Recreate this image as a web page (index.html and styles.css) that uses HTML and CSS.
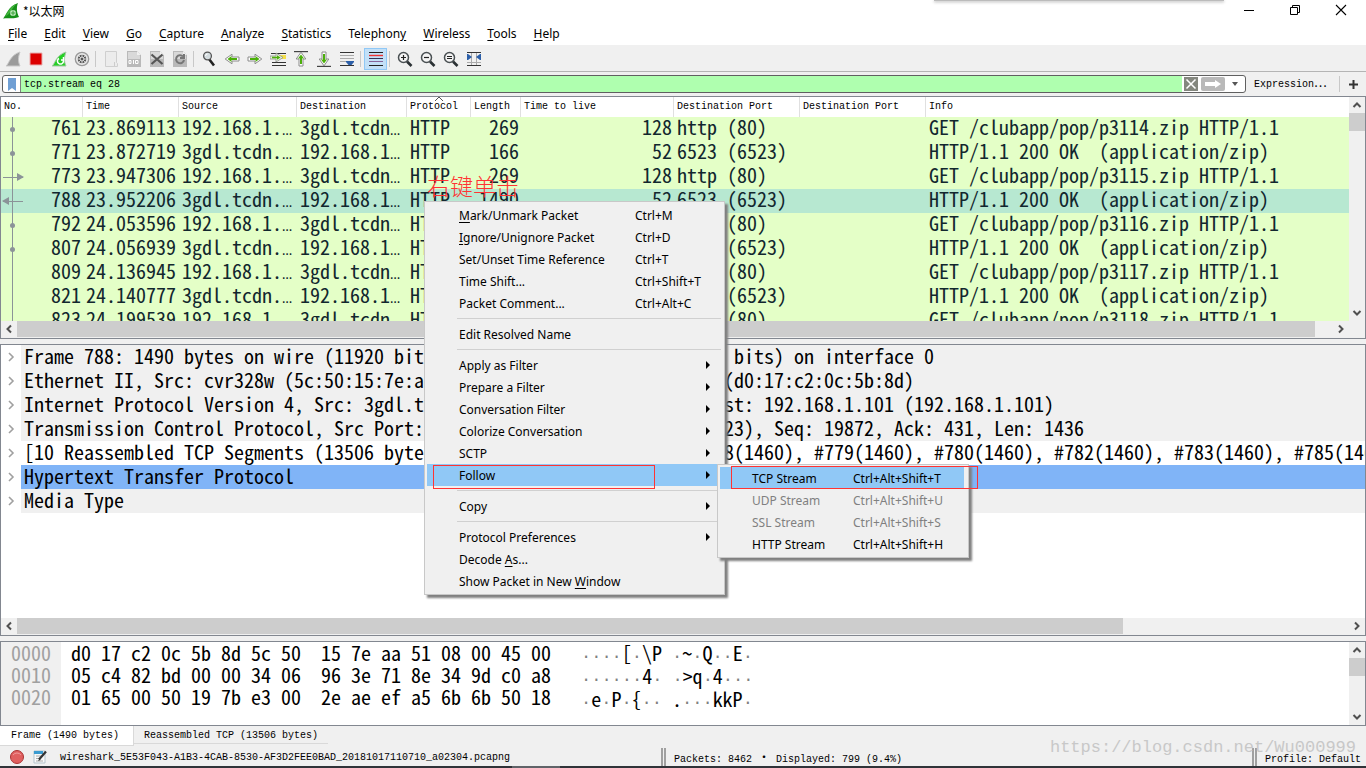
FILE: index.html
```html
<!DOCTYPE html>
<html lang="en">
<head>
<meta charset="utf-8">
<title>*以太网</title>
<link rel="stylesheet" href="styles.css">
</head>
<body>
<svg width="0" height="0" class="defs" aria-hidden="true">
  <symbol id="up" viewBox="0 0 16 16"><path d="M4.500 10 8 6.500 11.500 10" fill="none" stroke="#505050" stroke-width="2"/></symbol>
  <symbol id="down" viewBox="0 0 16 16"><path d="M4.500 6 8 9.500 11.500 6" fill="none" stroke="#505050" stroke-width="2"/></symbol>
  <symbol id="left" viewBox="0 0 16 16"><path d="M10 4.500 6.500 8 10 11.500" fill="none" stroke="#505050" stroke-width="2"/></symbol>
  <symbol id="right" viewBox="0 0 16 16"><path d="M6 4.500 9.500 8 6 11.500" fill="none" stroke="#505050" stroke-width="2"/></symbol>
  <symbol id="expand" viewBox="0 0 8 12"><path d="M2 2 6 6 2 10" fill="none" stroke="#a0a0a0" stroke-width="1.600"/></symbol>
  <symbol id="sub" viewBox="0 0 4 8"><path d="M0 0 4 4 0 8z" fill="#000"/></symbol>
  <symbol id="lens" viewBox="0 0 16 16"><path d="M10 10.500 14.500 15" stroke="#2b3134" stroke-width="2.600"/><circle cx="6.500" cy="6.500" r="5" fill="#f4f4f4" stroke="#4a5053" stroke-width="1.500"/></symbol>
  <symbol id="arrow" viewBox="0 0 16 16"><path d="M1 6h7V3.200L14.800 8 8 12.800V10H1z" fill="#fff" stroke="#8c8c8c"/><path d="M3 8h6" stroke="#4caf0a" stroke-width="2"/><path d="M8.500 5 12.500 8l-4 3z" fill="#4caf0a"/></symbol>
  <symbol id="doc" viewBox="0 0 16 16"><path d="M1 0h10l4 4v12H1z" fill="#b9b9b9"/><path d="M2 1h8.500L14 4.500V8H2z" fill="#d9d9d9"/><path d="M11 0v4h4z" fill="#f0f0f0"/></symbol>
</svg>

<header class="titlebar">
  <svg class="app" width="16" height="16" viewBox="0 0 16 16"><path d="M0 15.500C3 13 5 3 15 0c-2 5-1 10 1 14-5 2-11 1-16 1.500z" fill="#169018"/><path d="M1 14C5 11 6 4 13 1 7 8 8 11 1 14z" fill="#43b53d"/><circle cx="10" cy="10" r="3" fill="#bfe9bd"/><path d="M10 7.500v5M7.500 10h5" stroke="#3ba23a"/></svg>
  <h1 class="title">*以太网</h1>
  <div class="window-buttons">
    <button aria-label="Minimize"><svg width="12" height="12"><path d="M1 6.500h10" stroke="#000"/></svg></button>
    <button aria-label="Restore"><svg width="12" height="12" fill="none" stroke="#000"><path d="M1.500 3.500h7v7h-7zM3.500 3V1.500h7v7H9"/></svg></button>
    <button aria-label="Close"><svg width="12" height="12"><path d="M1 1 11 11M11 1 1 11" stroke="#000" stroke-width="1.100"/></svg></button>
  </div>
  <div class="window-behind"></div>
</header>

<nav class="menubar">
  <button><u>F</u>ile</button><button><u>E</u>dit</button><button><u>V</u>iew</button><button><u>G</u>o</button><button><u>C</u>apture</button><button><u>A</u>nalyze</button><button><u>S</u>tatistics</button><button>Telephon<u>y</u></button><button><u>W</u>ireless</button><button><u>T</u>ools</button><button><u>H</u>elp</button>
</nav>

<div class="toolbar" role="toolbar">
  <button aria-label="Start capture"><svg viewBox="0 0 16 16"><path d="M1 15C4 13 5 4 15 1c-2 5-2 10 0 14z" fill="#9b9b9b" stroke="#c9c9c9"/></svg></button>
  <button aria-label="Stop capture"><svg viewBox="0 0 16 16"><path d="M2 2h12v12H2z" fill="#dc0000" stroke="#e8b0b0" /></svg></button>
  <button aria-label="Restart capture"><svg viewBox="0 0 16 16"><path d="M1 15C4 13 5 4 15 1c-2 5-2 10 0 14z" fill="#25cf25" stroke="#a4c9a4"/><path d="M8 7.500a3 3 0 1 0 4 1M12.500 6v3H10" fill="none" stroke="#fff" stroke-width="1.500"/></svg></button>
  <button aria-label="Capture options"><svg viewBox="0 0 16 16"><circle cx="8" cy="8" r="6.700" fill="#e6e6e6" stroke="#999" stroke-width="1.300"/><circle cx="8" cy="8" r="4.300" fill="#555"/><path d="M8 3v10M3 8h10M4.500 4.500l7 7M11.500 4.500l-7 7" stroke="#e6e6e6" stroke-width=".8"/><circle cx="8" cy="8" r="2" fill="#555" stroke="#e6e6e6"/></svg></button>
  <i class="sep"></i>
  <button aria-label="Open"><svg viewBox="0 0 16 16"><path d="M2.500.500h11v11l1 1v3h-12z" fill="#ececec" stroke="#cfcfcf"/><path d="M11.500 11v4" stroke="#ccc"/></svg></button>
  <button aria-label="Save"><svg viewBox="0 0 16 16"><use href="#doc"/><path d="M3 9.500h2v3H3zM9.500 9.500h2.500v3H9.500z" fill="none" stroke="#fff"/><path d="M7.500 9v4" stroke="#fff"/></svg></button>
  <button aria-label="Close file"><svg viewBox="0 0 16 16"><use href="#doc"/><path d="M2.500 3.500l11 9.500M13.500 3.500l-11 9.500" stroke="#555" stroke-width="2.200"/></svg></button>
  <button aria-label="Reload"><svg viewBox="0 0 16 16"><use href="#doc"/><path d="M11 5.500A4 4 0 1 0 12 9M12 3v4H8" fill="none" stroke="#777" stroke-width="2"/></svg></button>
  <i class="sep"></i>
  <button aria-label="Find packet"><svg viewBox="0 0 16 16"><path d="M8 8l5 6.500" stroke="#222" stroke-width="2.600"/><circle cx="6.500" cy="5" r="3.900" fill="#d5dde0" stroke="#555" stroke-width="1.300"/><path d="M4.500 5a2 2 0 0 1 2-2" fill="none" stroke="#fff"/></svg></button>
  <button aria-label="Previous packet"><svg viewBox="0 0 16 16"><use href="#arrow" transform="rotate(180 8 8)"/></svg></button>
  <button aria-label="Next packet"><svg viewBox="0 0 16 16"><use href="#arrow"/></svg></button>
  <button aria-label="Go to packet"><svg viewBox="0 0 16 16"><path d="M1 2.500h15M2 11.500h14M2 14.500h14" stroke="#333" stroke-width="1.200"/><path d="M9 6h7" stroke="#f4e04a" stroke-width="4"/><path d="M0 5h6V2l7 4.500L6 11V8H0z" fill="#e8f5dc" stroke="#8c8c8c" stroke-width=".8"/><path d="M2 6.500h6" stroke="#4caf0a" stroke-width="1.600"/><path d="M7 4.200 10.500 6.500 7 8.800z" fill="#4caf0a"/></svg></button>
  <button aria-label="First packet"><svg viewBox="0 0 16 16"><path d="M1 .6h14" stroke="#444" stroke-width="1.200"/><use href="#arrow" transform="rotate(-90 8 8)"/></svg></button>
  <button aria-label="Last packet"><svg viewBox="0 0 16 16"><use href="#arrow" transform="rotate(90 8 8)"/><path d="M1 15.400h14" stroke="#444" stroke-width="1.200"/></svg></button>
  <button aria-label="Auto scroll"><svg viewBox="0 0 16 16"><path d="M1 1.500h14" stroke="#333"/><path d="M1 4.500h14M1 7.500h14M1 10.500h8" stroke="#aaa"/><path d="M1 14.500h14" stroke="#333"/><path d="M7 10h8v1l-2.500 3h-3L7 11z" fill="#2c5fa8"/></svg></button>
  <i class="sep"></i>
  <button class="on" aria-label="Colorize packets" aria-pressed="true"><svg viewBox="0 0 16 16"><path d="M1 1.500h14" stroke="#222"/><path d="M1 4.500h14" stroke="#e33" stroke-width="1.400"/><path d="M1 7.500h14" stroke="#335"/><path d="M1 10.500h14" stroke="#86659a"/><path d="M1 14.500h14" stroke="#222"/></svg></button>
  <i class="sep"></i>
  <button aria-label="Zoom in"><svg viewBox="0 0 16 16"><use href="#lens"/><path d="M4 6.500h5M6.500 4v5" stroke="#222" stroke-width="1.200"/></svg></button>
  <button aria-label="Zoom out"><svg viewBox="0 0 16 16"><use href="#lens"/><path d="M4 6.500h5" stroke="#222" stroke-width="1.200"/></svg></button>
  <button aria-label="Normal size"><svg viewBox="0 0 16 16"><use href="#lens"/><path d="M4 5.500h5M4 7.500h5" stroke="#222"/></svg></button>
  <button aria-label="Resize columns"><svg viewBox="0 0 16 16"><path d="M1 1.500h14M1 14.500h14" stroke="#333" stroke-width="1.200"/><path d="M1 11.500h14M5.500 2v12M10.500 2v12" stroke="#aaa"/><path d="M1 3h1l4 3-4 3H1zM15 3h-1l-4 3 4 3h1z" fill="#2c5fa8"/></svg></button>
</div>

<form class="filterbar">
  <div class="filter">
    <button type="button" class="bookmark" aria-label="Bookmark"><svg width="8" height="13"><path d="M0 0h8v13L4 10 0 13z" fill="#6f9fd4"/></svg></button>
    <input class="expr" type="text" value="tcp.stream eq 28" aria-label="Display filter">
    <button type="button" class="clear" aria-label="Clear"><svg width="14" height="14"><path d="M0 0h14v14H0z" fill="#84877f"/><path d="M2.500 2.500l9 9M11.500 2.500l-9 9" stroke="#fff" stroke-width="1.500"/></svg></button>
    <button type="button" class="apply" aria-label="Apply"><svg width="24" height="14"><rect width="24" height="14" rx="2" fill="#b9b9b9"/><path d="M4 5h10V3l6 4-6 4V9H4z" fill="#fff"/></svg></button>
    <button type="button" class="drop" aria-label="Recent filters"><svg width="6" height="4"><path d="M0 0h6L3 4z" fill="#555"/></svg></button>
  </div>
  <button type="button" class="expression">Expression<span class="wide-sign">…</span></button>
  <i class="sep"></i>
  <button type="button" class="add" aria-label="Add filter button"><svg width="9" height="9"><path d="M4.500 0v9M0 4.500h9" stroke="#333" stroke-width="2"/></svg></button>
</form>

<main class="panes">
  <section class="pane packets">
    <div class="view">
      <table class="list">
        <colgroup><col class="c-no"><col class="c-time"><col class="c-src"><col class="c-dst"><col class="c-proto"><col class="c-len"><col class="c-ttl"><col class="c-port"><col class="c-port"><col></colgroup>
        <thead><tr><th>No.</th><th>Time</th><th>Source</th><th>Destination</th><th class="sorted">Protocol<svg class="sort" width="8" height="4"><path d="M0 4 4 0 8 4" fill="none" stroke="#555"/></svg></th><th>Length</th><th>Time to live</th><th>Destination Port</th><th>Destination Port</th><th>Info</th></tr></thead>
        <tbody>
          <tr><td class="num dot">761</td><td>23.869113</td><td>192.168.1.<b>…</b></td><td>3gdl.tcdn<b>…</b></td><td>HTTP</td><td class="num">269</td><td class="num">128</td><td>http (80)</td><td></td><td>GET /clubapp/pop/p3114.zip HTTP/1.1</td></tr>
          <tr><td class="num dot">771</td><td>23.872719</td><td>3gdl.tcdn.<b>…</b></td><td>192.168.1<b>…</b></td><td>HTTP</td><td class="num">166</td><td class="num">52</td><td>6523 (6523)</td><td></td><td>HTTP/1.1 200 OK&nbsp; (application/zip)</td></tr>
          <tr><td class="num request">773</td><td>23.947306</td><td>192.168.1.<b>…</b></td><td>3gdl.tcdn<b>…</b></td><td>HTTP</td><td class="num">269</td><td class="num">128</td><td>http (80)</td><td></td><td>GET /clubapp/pop/p3115.zip HTTP/1.1</td></tr>
          <tr class="current"><td class="num response">788</td><td>23.952206</td><td>3gdl.tcdn.<b>…</b></td><td>192.168.1<b>…</b></td><td>HTTP</td><td class="num">1490</td><td class="num">52</td><td>6523 (6523)</td><td></td><td>HTTP/1.1 200 OK&nbsp; (application/zip)</td></tr>
          <tr><td class="num dot">792</td><td>24.053596</td><td>192.168.1.<b>…</b></td><td>3gdl.tcdn<b>…</b></td><td>HTTP</td><td class="num">269</td><td class="num">128</td><td>http (80)</td><td></td><td>GET /clubapp/pop/p3116.zip HTTP/1.1</td></tr>
          <tr><td class="num dot">807</td><td>24.056939</td><td>3gdl.tcdn.<b>…</b></td><td>192.168.1<b>…</b></td><td>HTTP</td><td class="num">1490</td><td class="num">52</td><td>6523 (6523)</td><td></td><td>HTTP/1.1 200 OK&nbsp; (application/zip)</td></tr>
          <tr><td class="num">809</td><td>24.136945</td><td>192.168.1.<b>…</b></td><td>3gdl.tcdn<b>…</b></td><td>HTTP</td><td class="num">269</td><td class="num">128</td><td>http (80)</td><td></td><td>GET /clubapp/pop/p3117.zip HTTP/1.1</td></tr>
          <tr><td class="num">821</td><td>24.140777</td><td>3gdl.tcdn.<b>…</b></td><td>192.168.1<b>…</b></td><td>HTTP</td><td class="num">1490</td><td class="num">52</td><td>6523 (6523)</td><td></td><td>HTTP/1.1 200 OK&nbsp; (application/zip)</td></tr>
          <tr><td class="num">823</td><td>24.199539</td><td>192.168.1.<b>…</b></td><td>3gdl.tcdn<b>…</b></td><td>HTTP</td><td class="num">269</td><td class="num">128</td><td>http (80)</td><td></td><td>GET /clubapp/pop/p3118.zip HTTP/1.1</td></tr>
        </tbody>
      </table>
    </div>
    <div class="vbar"><svg><use href="#up"/></svg><div class="track"><i class="thumb short"></i></div><svg><use href="#down"/></svg></div>
    <div class="hbar"><svg><use href="#left"/></svg><div class="track"><i class="thumb wide"></i></div><svg><use href="#right"/></svg></div>
    <div class="corner"></div>
  </section>

  <section class="pane details">
    <ul class="tree view">
      <li><svg><use href="#expand"/></svg><span>Frame 788: 1490 bytes on wire (11920 bits), 1490 bytes captured (11920 bits) on interface 0</span></li>
      <li><svg><use href="#expand"/></svg><span>Ethernet II, Src: cvr328w (5c:50:15:7e:aa:51), Dst: AsustekC_0c:5b:8d (d0:17:c2:0c:5b:8d)</span></li>
      <li><svg><use href="#expand"/></svg><span>Internet Protocol Version 4, Src: 3gdl.tcdn.qq.com (113.142.52.157), Dst: 192.168.1.101 (192.168.1.101)</span></li>
      <li><svg><use href="#expand"/></svg><span>Transmission Control Protocol, Src Port: http (80), Dst Port: 6523 (6523), Seq: 19872, Ack: 431, Len: 1436</span></li>
      <li class="plain"><svg><use href="#expand"/></svg><span>[10 Reassembled TCP Segments (13506 bytes): #776(366), #777(1460), #778(1460), #779(1460), #780(1460), #782(1460), #783(1460), #785(1460)</span></li>
      <li class="chosen"><svg><use href="#expand"/></svg><span>Hypertext Transfer Protocol</span></li>
      <li><svg><use href="#expand"/></svg><span>Media Type</span></li>
    </ul>
    <div class="hbar"><svg><use href="#left"/></svg><div class="track"><i class="thumb most"></i></div><svg><use href="#right"/></svg></div>
  </section>

  <section class="pane bytes">
    <div class="view dump">
      <pre class="offsets">0000
0010
0020</pre>
      <pre class="hex">d0 17 c2 0c 5b 8d 5c 50  15 7e aa 51 08 00 45 00
05 c4 82 bd 00 00 34 06  96 3e 71 8e 34 9d c0 a8
01 65 00 50 19 7b e3 00  2e ae ef a5 6b 6b 50 18</pre>
      <pre class="ascii"><s>····</s>[<s>·</s>\P <s>·</s>~<s>·</s>Q<s>··</s>E<s>·</s>
<s>······</s>4<s>·</s> <s>·</s>&gt;q<s>·</s>4<s>···</s>
<s>·</s>e<s>·</s>P<s>·</s>{<s>··</s> .<s>···</s>kkP<s>·</s></pre>
    </div>
    <div class="vbar"><svg><use href="#up"/></svg><div class="track"><i class="thumb short"></i></div><svg><use href="#down"/></svg></div>
  </section>
</main>

<div class="tabs" role="tablist">
  <button role="tab" aria-selected="true" class="tab active">Frame (1490 bytes)</button>
  <button role="tab" aria-selected="false" class="tab">Reassembled TCP (13506 bytes)</button>
</div>

<footer class="status">
  <div class="file">
    <svg width="14" height="14"><circle cx="7" cy="7" r="6.500" fill="#e06060" stroke="#a33"/><path d="M3 5a5 5 0 0 1 8 0" fill="none" stroke="#f09a9a"/></svg>
    <svg width="14" height="14"><path d="M1 1h11v12H1z" fill="#f8f8f8" stroke="#b5c4cc"/><path d="M1 1h9v3H1z" fill="#3b9bd0"/><path d="M3 6h5M3 8.500h3M3 11h7" stroke="#aaa"/><path d="M13 1.500 6 9.500" stroke="#333" stroke-width="2.200"/><path d="M6.500 8.500 5 11l2.500-1" fill="#333"/></svg>
    <span>wireshark_5E53F043-A1B3-4CAB-8530-AF3D2FEE0BAD_20181017110710_a02304.pcapng</span>
  </div>
  <div class="count">Packets: 8462 <span class="wide-sign">·</span> Displayed: 799 (9.4%)</div>
  <div class="profile">Profile: Default</div>
</footer>
<div class="taskbar"><i></i></div>

<div class="note">右键单击</div>

<div class="menu context" role="menu">
  <button role="menuitem"><span><u>M</u>ark/Unmark Packet</span><kbd>Ctrl+M</kbd></button>
  <button role="menuitem"><span><u>I</u>gnore/Unignore Packet</span><kbd>Ctrl+D</kbd></button>
  <button role="menuitem"><span>Set/Unset Time Reference</span><kbd>Ctrl+T</kbd></button>
  <button role="menuitem"><span>Time Shift...</span><kbd>Ctrl+Shift+T</kbd></button>
  <button role="menuitem"><span>Packet Comment...</span><kbd>Ctrl+Alt+C</kbd></button>
  <hr>
  <button role="menuitem"><span>Edit Resolved Name</span></button>
  <hr>
  <button role="menuitem"><span>Apply as Filter</span><svg><use href="#sub"/></svg></button>
  <button role="menuitem"><span>Prepare a Filter</span><svg><use href="#sub"/></svg></button>
  <button role="menuitem"><span>Conversation Filter</span><svg><use href="#sub"/></svg></button>
  <button role="menuitem"><span>Colorize Conversation</span><svg><use href="#sub"/></svg></button>
  <button role="menuitem"><span>SCTP</span><svg><use href="#sub"/></svg></button>
  <button role="menuitem" class="hot"><span>Follow</span><svg><use href="#sub"/></svg></button>
  <hr>
  <button role="menuitem"><span>Copy</span><svg><use href="#sub"/></svg></button>
  <hr>
  <button role="menuitem"><span>Protocol Preferences</span><svg><use href="#sub"/></svg></button>
  <button role="menuitem"><span>Decode <u>A</u>s...</span></button>
  <button role="menuitem"><span>Show Packet in New <u>W</u>indow</span></button>
</div>
<div class="menu follow" role="menu">
  <button role="menuitem" class="hot"><span>TCP Stream</span><kbd>Ctrl+Alt+Shift+T</kbd></button>
  <button role="menuitem" disabled><span>UDP Stream</span><kbd>Ctrl+Alt+Shift+U</kbd></button>
  <button role="menuitem" disabled><span>SSL Stream</span><kbd>Ctrl+Alt+Shift+S</kbd></button>
  <button role="menuitem"><span>HTTP Stream</span><kbd>Ctrl+Alt+Shift+H</kbd></button>
</div>
<div class="mark mark-follow"></div>
<div class="mark mark-tcp"></div>
<div class="watermark">https://blog.csdn.net/Wu000999</div>
</body>
</html>
```

FILE: styles.css
```css
:root {
  --ui: "Noto Sans", "Noto Sans CJK SC", sans-serif;
  --small: "Liberation Mono", monospace;
  --mono: "Noto Sans Mono CJK SC", "Liberation Mono", monospace;
  --edge: #828790;
  --face: #f0f0f0;
}
* { box-sizing: border-box; }
body {
  margin: 0;
  height: 100vh;
  display: flex;
  flex-direction: column;
  position: relative;
  overflow: hidden;
  background: var(--face);
  color: #000;
  font: 12px/20px var(--ui);
}
button, input, kbd, pre, h1 { font: inherit; color: inherit; margin: 0; }
button { border: 0; padding: 0; background: none; }
svg { display: block; flex: none; }
u { text-underline-offset: 2px; }
.defs { position: absolute; }
.wide-sign { font-family: "Noto Sans Mono CJK SC", monospace; font-size: 12px; line-height: 1; }

.titlebar { display: flex; align-items: center; height: 23px; padding: 0 2px 1px 3px; background: #fff; position: relative; flex: none; }
.title { margin-left: 4px; font: 12px/20px "Noto Sans CJK SC", sans-serif; flex: 1; }
.window-buttons { display: flex; align-self: flex-start; }
.window-buttons button { width: 46px; height: 20px; display: grid; place-items: center; }
.window-behind { position: absolute; top: 0; left: 934px; width: 290px; height: 1px; background: #bbb; box-shadow: 0 1px 3px #888; }

.menubar { display: flex; height: 23px; padding-left: 8px; gap: 17px; background: #fff; border-bottom: 1px solid #f0f0f0; line-height: 22px; flex: none; }

.toolbar { display: flex; align-items: center; height: 26px; padding: 1px 1px 0; border-bottom: 1px solid #b4b4b4; flex: none; }
.toolbar button { width: 23px; height: 22px; display: grid; place-items: center; }
.toolbar svg { width: 16px; height: 16px; }
.toolbar .on { background: #c3e0f7; border: 1px solid #90c8f6; }
.sep { width: 1px; height: 16px; background: #c8c8c8; flex: none; }
.toolbar .sep { margin: 0 3px 0 2px; }

.filterbar { display: flex; align-items: center; height: 24px; padding: 0 8px 0 2px; flex: none; font: 10px/16px var(--small); }
.filter { flex: 1; display: flex; align-items: center; height: 18px; border: 1px solid #606060; border-radius: 3px; background: #fff; overflow: hidden; margin-right: 8px; }
.bookmark { width: 17px; display: grid; place-items: center; }
.expr { flex: 1; min-width: 0; height: 16px; border: 0; border-left: 1px solid #808080; padding: 2px 3px 0; background: #afffaf; outline: 0; }
.clear { margin: 0 3px 0 2px; }
.drop { width: 20px; display: grid; place-items: center; }
.expression { width: 74px; text-align: left; white-space: nowrap; }
.filterbar .sep { margin: 0 9px 0 11px; }

.panes { flex: 1; min-height: 0; display: flex; flex-direction: column; gap: 5px; }
.pane { min-height: 0; display: grid; grid-template-columns: minmax(0, 1fr) auto; grid-template-rows: minmax(0, 1fr) auto; background: #fff; border: 1px solid var(--edge); }
.packets { flex: 243 1 0; }
.details { flex: 293 1 0; }
.bytes { flex: 84 1 0; }
.view { overflow: hidden; font: 20px/24px var(--mono); }

.vbar { width: 16px; display: flex; flex-direction: column; background: var(--face); }
.hbar { height: 17px; display: flex; background: var(--face); padding-bottom: 1px; }
.corner { background: var(--face); }
.vbar svg, .hbar svg { width: 16px; height: 16px; }
.track { flex: 1; display: flex; min-height: 0; }
.thumb { background: #cdcdcd; }
.vbar .thumb { width: 16px; }
.short { height: 18px; }
.wide { width: 98.6%; }
.most { width: 83%; }

.list { table-layout: fixed; width: 100%; border-spacing: 0; color: #12272e; }
.list th, .list td { padding: 0 2px 0 4px; text-align: left; vertical-align: top; white-space: nowrap; position: relative; }
.list th { height: 20px; font: 10px/20px var(--small); color: #000; border-right: 1px solid #e0e0e0; background: #fff; padding: 0 0 0 3px; }
.list td { height: 24px; padding-left: 3px; line-height: 20px; }
.list td.num { text-align: right; }
.list b { font: 17px/1 var(--small); }
.list th:last-child { border-right: 0; }
.c-no { width: 82px; } .c-time { width: 96px; } .c-src { width: 118px; } .c-dst { width: 110px; } .c-proto { width: 64px; }
.c-len { width: 50px; } .c-ttl { width: 153px; } .c-port { width: 126px; }
.list tbody tr { background: #e4ffc7; }
.list tbody tr.current { background: #b7e8d1; }
.sort { position: absolute; top: 0; left: 28px; }
.list td:first-child { background: linear-gradient(#8b9398, #8b9398) 11px 0 / 1px 100% no-repeat; }
.list td.dot::before { content: ""; position: absolute; left: 9px; top: 10px; width: 5px; height: 5px; border-radius: 50%; background: #8b9398; }
.request::before, .response::before { content: ""; position: absolute; left: 2px; top: 12px; width: 20px; height: 1px; background: #8b9398; }
.request::after, .response::after { content: ""; position: absolute; top: 8px; border: solid transparent; border-width: 4px 0; }
.request::after { left: 16px; border-left: 7px solid #8b9398; }
.response::after { left: 1px; border-right: 7px solid #8b9398; }

.tree { margin: 0; padding: 0; list-style: none; grid-column: 1 / -1; }
.tree li { display: flex; align-items: center; white-space: pre; }
.tree svg { width: 8px; height: 12px; margin: 0 6px; }
.tree span { flex: 1; min-width: 0; padding: 0 0 2px 3px; line-height: 22px; background: var(--face); }
.tree .plain span { background: #fff; }
.tree .chosen span { background: #80b4f7; }
.details .hbar { grid-column: 1 / -1; }

.dump { display: flex; line-height: 22px; }
.offsets { width: 60px; padding-left: 10px; background: var(--face); color: #a0a0a0; }
.hex { padding-left: 10px; }
.ascii { padding-left: 30px; }
.ascii s { text-decoration: none; color: #808080; font: 17px/1 var(--small); }

.tabs { display: flex; align-items: flex-start; height: 20px; flex: none; font: 10px/20px var(--small); }
.tab { padding: 0 10px; border-bottom: 1px solid #d9d9d9; height: 18px; }
.tab.active { height: 20px; padding: 0 14px 0 11px; background: #fff; border-right: 1px solid #d9d9d9; }

.status { display: flex; height: 20px; flex: none; font: 10px/20px var(--small); white-space: nowrap; padding-top: 2px; }
.file { flex: 1; display: flex; align-items: center; gap: 9px; padding-left: 10px; }
.file span { padding: 2px 0 0 4px; }
.count, .profile { border-left: 5px double #a0a0a0; padding: 2px 0 0 8px; }
.count { width: 591px; }
.profile { width: 114px; }
.taskbar { height: 2px; background: #303338; flex: none; display: flex; }
.taskbar i { width: 48px; margin-left: 512px; background: #606368; }

.menu { position: absolute; background: var(--face); border: 1px solid #c8c8c8; padding: 2px; box-shadow: 3px 3px 2px #808080; display: flex; flex-direction: column; }
.menu button { height: 22px; display: flex; align-items: center; text-align: left; white-space: nowrap; padding: 1px 0 0 32px; }
.menu hr { width: calc(100% - 31px); height: 1px; border: 0; background: #d0d0d0; margin: 4px 1px 4px auto; }
.menu svg { width: 4px; height: 8px; margin: 0 12px 2px auto; }
.menu .hot { background: #90c8f6; }
.menu :disabled { color: #808080; }
.context { left: 424px; top: 201px; width: 301px; }
.context span { width: 176px; }
.follow { left: 717px; top: 464px; width: 252px; padding-right: 4px; }
.follow span { width: 101px; }
.mark { position: absolute; border: 1px solid #f33; }
.mark-follow { left: 433px; top: 465px; width: 222px; height: 24px; }
.mark-tcp { left: 731px; top: 466px; width: 247px; height: 23px; }
.note { position: absolute; left: 427px; top: 173px; color: #f33; font: 300 23px/24px "Noto Sans CJK SC", sans-serif; }
.watermark { position: absolute; right: 10px; bottom: 8px; color: #c8c8c8; font: 17px/24px var(--small); }
```
